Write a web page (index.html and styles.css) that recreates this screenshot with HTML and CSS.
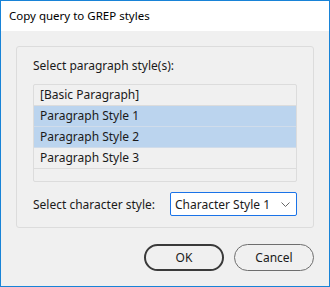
FILE: index.html
```html
<!DOCTYPE html>
<html lang="en">
<head>
    <meta charset="UTF-8">
    <title>Copy query to GREP styles</title>
    <link rel="stylesheet" href="styles.css">
</head>
<body>
    <div class="window">
        <div class="titlebar">Copy query to GREP styles</div>
        <div class="content">
            <div class="group">
                <div class="label">Select paragraph style(s):</div>
                <div class="listbox">
                    <div class="row">[Basic Paragraph]</div>
                    <div class="row selected">Paragraph Style 1</div>
                    <div class="row selected">Paragraph Style 2</div>
                    <div class="row">Paragraph Style 3</div>
                </div>
                <div class="char-row">
                    <span class="label">Select character style:</span>
                    <div class="dropdown">
                        <span>Character Style 1</span>
                        <svg width="9" height="5" viewBox="0 0 9 5"><path d="M0.5 0.5 L4.5 4.5 L8.5 0.5" fill="none" stroke="#666" stroke-width="1"/></svg>
                    </div>
                </div>
            </div>
            <div class="buttons">
                <button class="btn default">OK</button>
                <button class="btn">Cancel</button>
            </div>
        </div>
    </div>
</body>
</html>
```

FILE: styles.css
```css
html, body {
    margin: 0;
    padding: 0;
}
body {
    font-family: "Noto Sans", "Open Sans", sans-serif;
    font-size: 12px;
    color: #1a1a1a;
}
.window {
    width: 330px;
    height: 287px;
    box-sizing: border-box;
    border: 1px solid #1883d7;
    background: #f0f0f0;
}
.titlebar {
    height: 30px;
    line-height: 30px;
    padding-left: 8px;
    background: white;
    color: #000;
    font-size: 11.5px;
}
.content {
    padding: 15px 15px 0 15px;
}
.group {
    height: 182px;
    box-sizing: border-box;
    border: 1px solid #dcdcdc;
    border-radius: 3px;
    padding: 10px 16px 0 16px;
}
.label {
    line-height: 17px;
    color: #1a1a1a;
}
.listbox {
    margin-top: 10px;
    height: 98px;
    box-sizing: border-box;
    border: 1px solid #dcdcdc;
    border-radius: 2px;
}
.row {
    height: 20px;
    line-height: 20px;
    padding-left: 6px;
    border-bottom: 1px solid #dcdcdc;
}
.row.selected {
    background: #bbd4ee;
    border-bottom-color: #d0dcea;
}
.char-row {
    display: flex;
    align-items: center;
    justify-content: space-between;
    margin-top: 10px;
}
.dropdown {
    width: 127px;
    height: 24px;
    box-sizing: border-box;
    border: 1px solid #1a73e8;
    border-radius: 2px;
    background: white;
    display: flex;
    align-items: center;
    justify-content: space-between;
    padding: 0 6px 0 4px;
}
.buttons {
    display: flex;
    justify-content: flex-end;
    gap: 10px;
    margin-top: 16px;
}
.btn {
    width: 80px;
    height: 27px;
    box-sizing: border-box;
    border: 1px solid #6e6e6e;
    border-radius: 14px;
    background: #f0f0f0;
    font-family: inherit;
    font-size: 12px;
    color: #1a1a1a;
    padding: 0;
}
.btn.default {
    border: 2px solid #3a3a3a;
}
```
